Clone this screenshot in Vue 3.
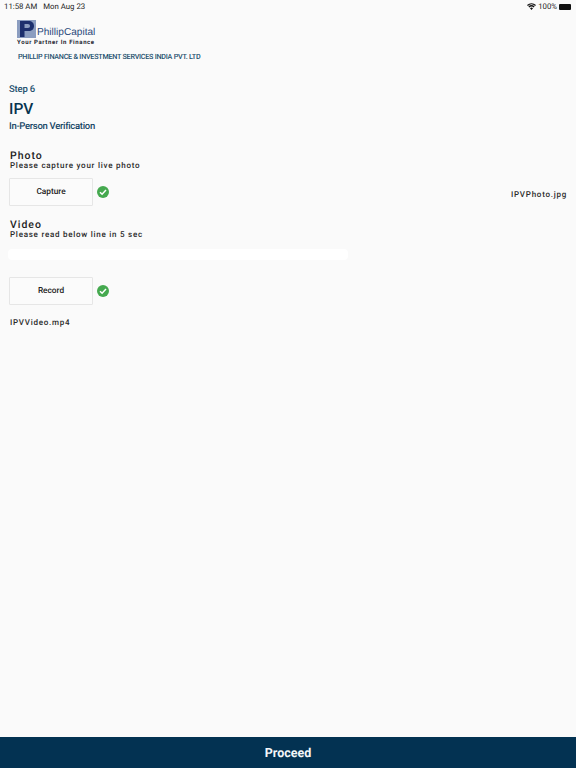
<script setup>
</script>

<template>
  <div class="page">
    <div class="status">
      <div class="status-left"><span>11:58 AM</span><span>Mon Aug 23</span></div>
      <div class="status-right">
        <svg width="9" height="7" viewBox="0 0 18 14"><path d="M9 14 6 10.6a4.4 4.4 0 0 1 6 0zM4.6 9 2.8 7a9.3 9.3 0 0 1 12.400 0l-1.800 2a6.600 6.600 0 0 0-8.800 0zM1.800 5.900 0 3.900a13.500 13.500 0 0 1 18 0l-1.800 2a10.900 10.900 0 0 0-14.400 0z" fill="#111"/></svg>
        <span>100%</span>
        <span class="battery"></span>
      </div>
    </div>
    <header class="brand">
      <div class="logo">
        <div class="logo-top">
          <div class="mark"><svg width="19" height="18" viewBox="0 0 19 18"><rect width="19" height="18" fill="#8b9dc0"/><path d="M3 1h8.500c3.500 0 5.500 2 5.500 5s-2 5-5.500 5H7.500v6H3zM7.500 4v4h3.300c1.500 0 2.200-.8 2.200-2s-.7-2-2.200-2z" fill="#1c2f6d" fill-rule="evenodd"/></svg></div>
          <span class="logo-name">PhillipCapital</span>
        </div>
        <div class="tagline">Your Partner In Finance</div>
      </div>
      <div class="company">PHILLIP FINANCE &amp; INVESTMENT SERVICES INDIA PVT. LTD</div>
    </header>
    <main class="content">
      <div class="step">Step 6</div>
      <h1 class="title">IPV</h1>
      <div class="subtitle">In-Person Verification</div>

      <section class="photo">
        <h2 class="label">Photo</h2>
        <p class="hint">Please capture your live photo</p>
        <div class="row spread">
          <div class="action">
            <button class="btn">Capture</button>
            <svg class="tick" width="12" height="12" viewBox="0 0 12 12"><circle cx="6" cy="6" r="6" fill="#45a94f"/><path d="M3 6.200 5.100 8.200 9 4.100" fill="none" stroke="#fff" stroke-width="1.500"/></svg>
          </div>
          <span class="file file-right">IPVPhoto.jpg</span>
        </div>
      </section>

      <section class="video">
        <h2 class="label">Video</h2>
        <p class="hint">Please read below line in 5 sec</p>
        <div class="read-line"></div>
        <div class="action">
          <button class="btn">Record</button>
          <svg class="tick" width="12" height="12" viewBox="0 0 12 12"><circle cx="6" cy="6" r="6" fill="#45a94f"/><path d="M3 6.200 5.100 8.200 9 4.100" fill="none" stroke="#fff" stroke-width="1.500"/></svg>
        </div>
        <div class="file file-below">IPVVideo.mp4</div>
      </section>
    </main>
    <button class="proceed">Proceed</button>
  </div>
</template>

<style>
html, body { margin: 0; padding: 0; }
</style>

<style scoped>
.page {
  width: 576px;
  height: 768px;
  display: flex;
  flex-direction: column;
  background: #fafafa;
  font-family: Roboto, "Liberation Sans", sans-serif;
  color: #222;
  overflow: hidden;
  text-rendering: geometricPrecision;
}
.status {
  height: 13px;
  padding: 0 5px 0 4px;
  display: flex;
  justify-content: space-between;
  align-items: center;
  font-size: 7.800px;
  color: #222;
}
.status-left { display: flex; gap: 6px; }
.status-right { display: flex; align-items: center; gap: 2px; }
.battery {
  width: 12px;
  height: 6px;
  display: block;
  background: #111;
  border-radius: 1px;
}
.brand {
  height: 57px;
  box-sizing: border-box;
  padding: 6px 0 0 17px;
}
.logo { width: 80px; }
.logo-top { display: flex; align-items: flex-end; height: 19px; }
.mark { width: 19px; height: 18px; line-height: 0; }
.logo-name {
  margin: 0 0 -1px 1px;
  font-family: "Liberation Sans", Arial, sans-serif;
  font-size: 10.100px;
  line-height: 12px;
  color: #2c4a7c;
  white-space: nowrap;
}
.tagline {
  margin-top: 1px;
  font-size: 6px;
  line-height: 7px;
  font-weight: 700;
  letter-spacing: .62px;
  color: #1c2430;
  white-space: nowrap;
}
.company {
  margin: 6px 0 0 1px;
  font-size: 7.200px;
  line-height: 10px;
  font-weight: 500;
  letter-spacing: -.25px;
  color: #24506e;
  white-space: nowrap;
}
.content { flex: 1; padding: 13px 0 0 0; }
.step {
  margin-left: 9px;
  font-size: 9.500px;
  line-height: 13px;
  font-weight: 500;
  letter-spacing: -.2px;
  color: #24506e;
}
.title {
  margin: 3px 0 0 9px;
  font-size: 15.500px;
  line-height: 20px;
  font-weight: 500;
  color: #06344f;
}
.subtitle {
  margin: 2px 0 0 9px;
  font-size: 9.500px;
  line-height: 11px;
  font-weight: 500;
  letter-spacing: -.3px;
  color: #174766;
  white-space: nowrap;
}
.photo { margin-top: 18px; padding-left: 10px; }
.label {
  margin: 0;
  font-size: 10.500px;
  line-height: 12px;
  font-weight: 500;
  letter-spacing: 1px;
  color: #222;
}
.hint {
  margin: -1px 0 0;
  font-size: 8px;
  line-height: 10px;
  font-weight: 500;
  letter-spacing: .75px;
  color: #2a2a2a;
}
.row { display: flex; }
.spread { justify-content: space-between; align-items: flex-end; margin-top: 7px; padding-right: 9px; }
.action { display: flex; align-items: center; gap: 4px; margin-left: -1px; }
.btn {
  width: 84px;
  height: 28px;
  padding: 0;
  border: 1px solid #e6e6e6;
  border-radius: 1px;
  background: #fbfbfb;
  font: 500 8.300px Roboto, sans-serif;
  text-rendering: geometricPrecision;
  color: #222;
}
.tick { display: block; }
.file {
  font-size: 8px;
  line-height: 10px;
  font-weight: 500;
  letter-spacing: .75px;
  color: #2a2a2a;
}
.file-right { margin-bottom: 6px; }
.video { margin-top: 13px; padding-left: 10px; }
.read-line {
  width: 340px;
  height: 11px;
  margin: 9px 0 0 -2px;
  background: #fff;
  border-radius: 4px;
}
.video .action { margin-top: 17px; }
.file-below { margin-top: 13px; }
.proceed {
  height: 31px;
  flex: none;
  border: 0;
  padding: 1px 0 0;
  background: #033252;
  color: #f4f7f9;
  font: 700 12.500px Roboto, sans-serif;
  text-rendering: geometricPrecision;
  text-align: center;
}
</style>
